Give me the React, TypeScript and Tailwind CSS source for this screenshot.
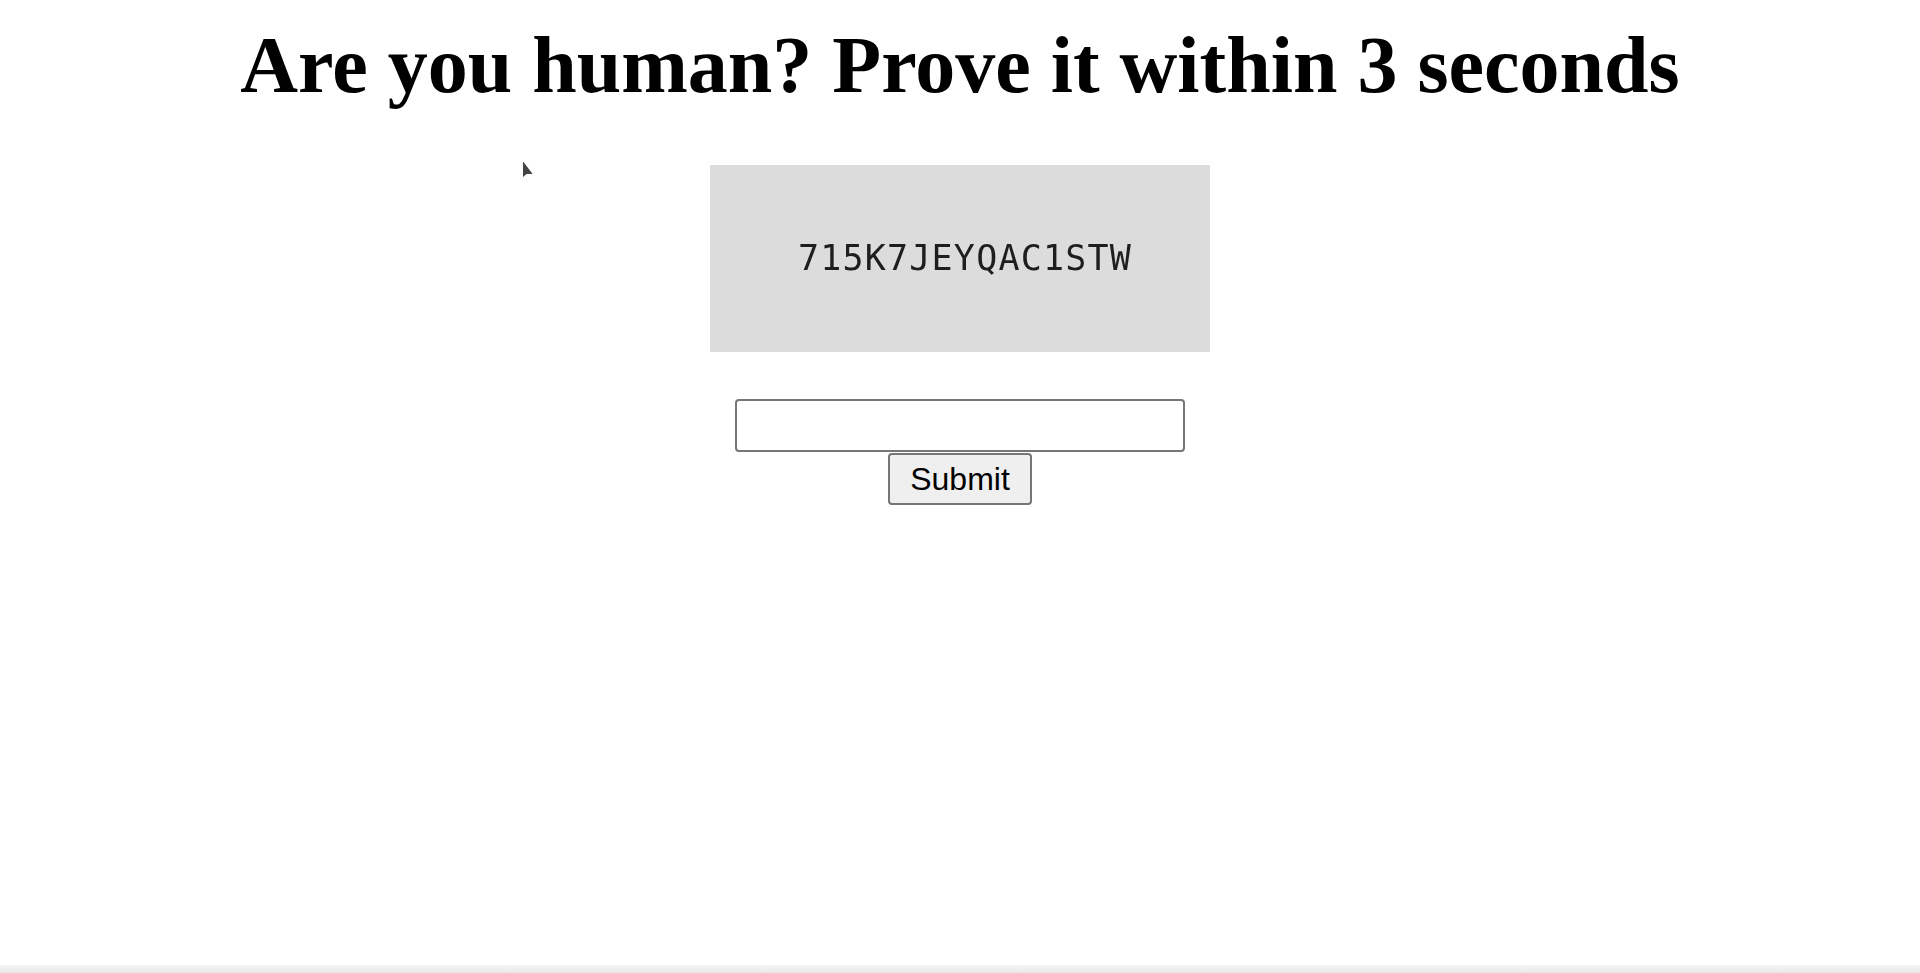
export default function App() {
  return (
    <div className="relative min-h-[973px] bg-white overflow-hidden">
      <div className="flex flex-col items-center">
        <h1 className="mt-[19px] text-[80px] leading-[92px] font-bold text-black font-['Liberation_Serif',serif] whitespace-nowrap">
          Are you human? Prove it within 3 seconds
        </h1>

        <div className="mt-[54px] w-[500px] h-[187px] bg-[#dcdcdc] flex items-center justify-center">
          <span className="ml-[10px] text-[35px] tracking-[1.2px] text-[#1e1e1e] font-['DejaVu_Sans_Mono',monospace] blur-[0.4px]">
            715K7JEYQAC1STW
          </span>
        </div>

        <input
          type="text"
          className="mt-[47px] w-[450px] h-[53px] border-2 border-[#767676] rounded-[4px] bg-white px-2 text-[30px] font-['Liberation_Sans',sans-serif]"
        />
        <button className="mt-px w-[144px] h-[52px] border-2 border-[#767676] rounded-[4px] bg-[#efefef] text-[32px] text-black font-['Liberation_Sans',sans-serif] leading-none">
          Submit
        </button>
      </div>

      {/* mouse pointer left in the shot */}
      <svg
        className="absolute left-[521px] top-[159px]"
        width="14"
        height="24"
        viewBox="0 0 14 24"
      >
        <path d="M1.5 1 L1.5 19 L5.5 15.5 L12.5 15.5 Z" fill="#444" stroke="#fff" strokeWidth="1" />
      </svg>

      <div className="absolute left-0 right-0 bottom-0 h-[8px] bg-gradient-to-b from-[#f6f6f6] to-[#e6e6e6]" />
    </div>
  );
}
